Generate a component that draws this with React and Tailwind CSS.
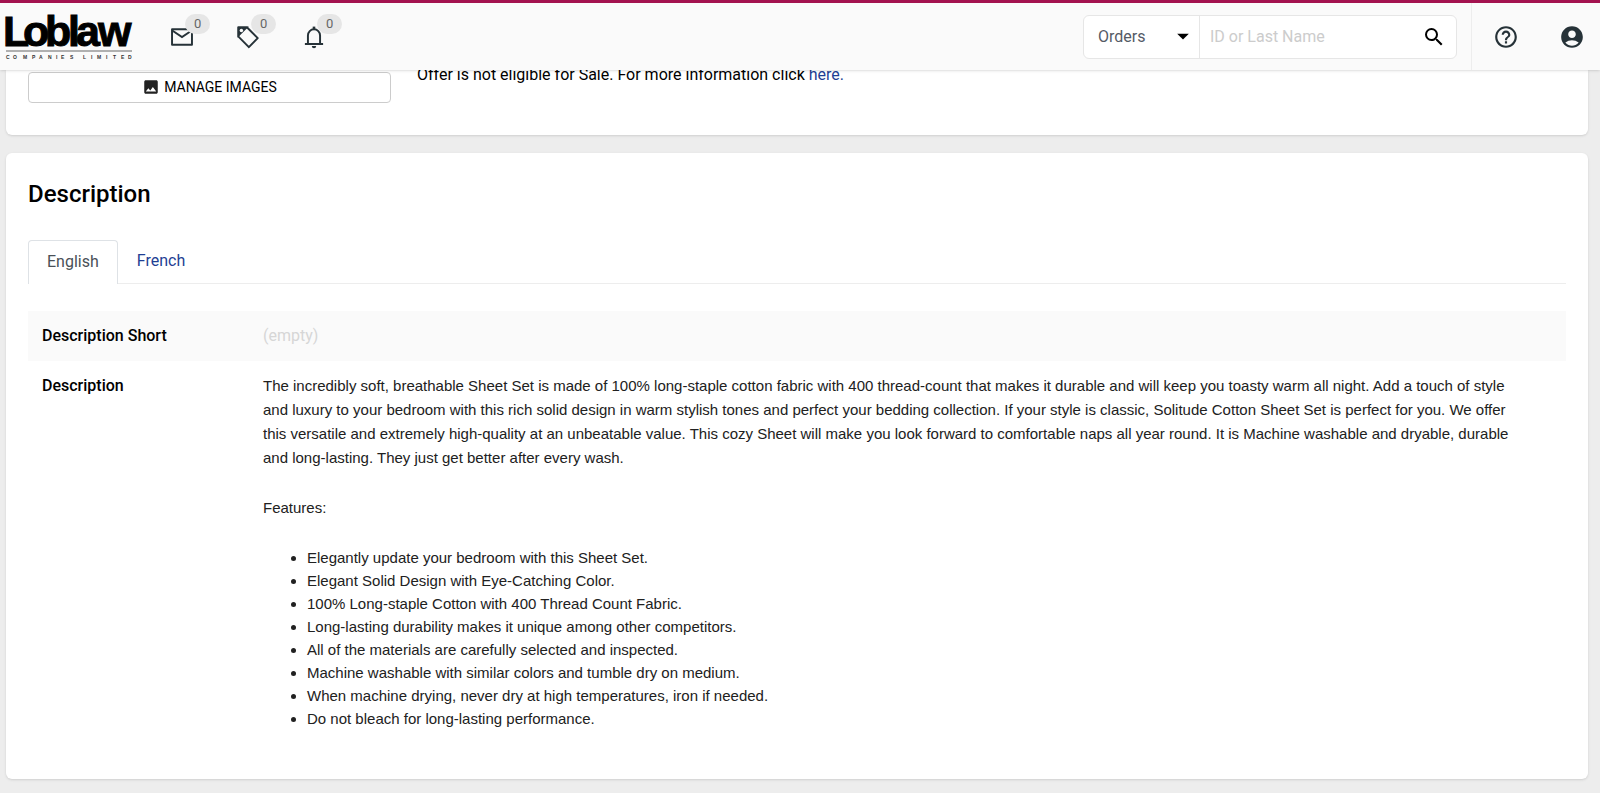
import { useState } from 'react';
import { MdImage, MdSearch, MdHelpOutline, MdAccountCircle, MdArrowDropDown } from 'react-icons/md';

const FEATURES = [
  'Elegantly update your bedroom with this Sheet Set.',
  'Elegant Solid Design with Eye-Catching Color.',
  '100% Long-staple Cotton with 400 Thread Count Fabric.',
  'Long-lasting durability makes it unique among other competitors.',
  'All of the materials are carefully selected and inspected.',
  'Machine washable with similar colors and tumble dry on medium.',
  'When machine drying, never dry at high temperatures, iron if needed.',
  'Do not bleach for long-lasting performance.',
];

function Logo() {
  return (
    <svg width="134" height="60" viewBox="0 0 134 60" role="img" aria-label="Loblaw Companies Limited">
      <text
        x="0 20 42 65 73 95"
        y="39"
        fontSize="43"
        fontWeight="700"
        stroke="#000"
        strokeWidth="1"
        className="font-['Liberation_Sans',sans-serif]"
      >
        Loblaw
      </text>
      <rect x="3" y="43" width="126" height="2" fill="#b0b0b0" />
      <text
        x="3 10 20 29 36 45 53 58 67 73 80 88 94 103 110 118 125"
        y="52"
        fontSize="5"
        fontWeight="700"
        fill="#333"
        className="font-['Liberation_Sans',sans-serif]"
      >
        COMPANIES LIMITED
      </text>
    </svg>
  );
}

function MailIcon() {
  return (
    <svg width="26" height="26" viewBox="0 0 24 24" fill="none" stroke="currentColor" strokeWidth="1.8">
      <path d="M2.8 4.9h18.4v14.2H2.8z" strokeLinejoin="round" />
      <path d="M3 6l9 6 9-6" />
    </svg>
  );
}

function TagIcon() {
  return (
    <svg width="26" height="26" viewBox="0 0 24 24" fill="none" stroke="currentColor" strokeWidth="1.8">
      <path d="M3.2 3.2h8l9.8 9.8-8.2 8.4-9.6-9.8z" strokeLinejoin="round" />
      <path d="M3.2 3.2h7.4l-7.4 7.4z" fill="currentColor" />
      <circle cx="5.9" cy="5.9" r="1.6" fill="#fafafa" stroke="none" />
    </svg>
  );
}

function BellIcon() {
  return (
    <svg width="26" height="26" viewBox="0 0 24 24" fill="none" stroke="currentColor" strokeWidth="1.8">
      <path d="M3.6 18.4h16.8M6.4 18v-7.5a5.6 5.6 0 0 1 11.2 0V18" />
      <path d="M12 4.8V2.4" strokeWidth="2.4" />
      <path d="M10 20.4a2 2 0 0 0 4 0z" fill="currentColor" stroke="none" />
    </svg>
  );
}

function HeaderButton({ label, count, children }) {
  return (
    <button type="button" aria-label={label} className="relative text-[#263238]">
      {children}
      <span className="absolute -top-2.5 left-4 rounded-full bg-[#e6e6e6] px-[9px] text-[13px] leading-5 text-[#666]">
        {count}
      </span>
    </button>
  );
}

function Header() {
  const [query, setQuery] = useState('');

  return (
    <header className="sticky top-0 z-10 flex h-[70px] items-center border-t-[3px] border-[#a3124f] bg-[#fafafa] shadow">
      <a href="#" className="ml-[3px]">
        <Logo />
      </a>
      <nav className="ml-8 flex gap-10">
        <HeaderButton label="Messages" count={0}><MailIcon /></HeaderButton>
        <HeaderButton label="Offers" count={0}><TagIcon /></HeaderButton>
        <HeaderButton label="Notifications" count={0}><BellIcon /></HeaderButton>
      </nav>

      <form
        onSubmit={(e) => e.preventDefault()}
        className="ml-auto flex h-11 w-[374px] rounded-md border border-[#e6e6e6] bg-white"
      >
        <div className="relative flex w-[116px] border-r border-[#e6e6e6]">
          <select aria-label="Search type" className="w-full appearance-none bg-transparent px-3.5 text-[#555b66]">
            <option>Orders</option>
            <option>Offers</option>
          </select>
          <MdArrowDropDown size={28} className="pointer-events-none absolute right-0.5 top-1.5 text-black" />
        </div>
        <input
          type="text"
          aria-label="ID or Last Name"
          placeholder="ID or Last Name"
          value={query}
          onChange={(e) => setQuery(e.target.value)}
          className="min-w-0 flex-1 px-2.5 placeholder:text-[#ccc] focus:outline-none"
        />
        <button type="submit" aria-label="Search" className="px-2.5 text-black">
          <MdSearch size={24} />
        </button>
      </form>

      <div className="ml-3.5 flex items-center gap-10 self-stretch border-l border-[#ededed] pl-[21px] pr-[15px] text-[#263238]">
        <button type="button" aria-label="Help"><MdHelpOutline size={26} /></button>
        <button type="button" aria-label="Account"><MdAccountCircle size={26} /></button>
      </div>
    </header>
  );
}

function Tab({ active, onClick, children }) {
  return (
    <button
      type="button"
      role="tab"
      aria-selected={active}
      onClick={onClick}
      className={
        active
          ? '-mb-px rounded-t border border-b-0 border-[#dee2e6] bg-white px-[18px] pb-2.5 pt-2 leading-6 text-[#495057]'
          : 'border border-b-0 border-transparent px-[18px] pb-2.5 pt-2 leading-6 text-[#1f3f94]'
      }
    >
      {children}
    </button>
  );
}

export default function App() {
  const [tab, setTab] = useState('English');

  return (
    <div className="min-h-screen bg-[#ededed] pb-[15px] font-[Roboto,sans-serif] text-base text-black">
      <Header />
      <main className="mr-3 ml-1.5 flex flex-col gap-[18px]">
        <section className="flex items-start gap-[26px] rounded-b-md bg-white px-[22px] pb-8 pt-0.5 shadow">
          <button
            type="button"
            className="flex h-[31px] w-[363px] items-center justify-center gap-1 rounded border border-[#ccc] pb-0.5 text-sm"
          >
            <MdImage size={18} className="text-[#222]" />
            MANAGE IMAGES
          </button>
          <p className="-mt-[9px] leading-6">
            Offer is not eligible for Sale. For more information click{' '}
            <a href="#" className="text-[#1f3f94]">here.</a>
          </p>
        </section>

        <section className="rounded-md bg-white px-[22px] pb-9 pt-[25px] shadow">
          <h2 className="text-2xl font-medium">Description</h2>

          <div role="tablist" className="mt-[30px] flex border-b border-[#ededed]">
            <Tab active={tab === 'English'} onClick={() => setTab('English')}>English</Tab>
            <Tab active={tab === 'French'} onClick={() => setTab('French')}>French</Tab>
          </div>

          <table className="mt-[27px] w-full">
            <tbody>
              <tr className="bg-[#fafafa] align-top">
                <th scope="row" className="w-[221px] px-3.5 py-[13px] text-left font-medium">Description Short</th>
                <td className="px-3.5 py-[13px] text-[#d6d6d6]">(empty)</td>
              </tr>
              <tr className="align-top">
                <th scope="row" className="px-3.5 py-[13px] text-left font-medium">Description</th>
                <td className="py-[13px] pl-3.5 pr-11 font-['Liberation_Sans',Arial,sans-serif] text-[15px] leading-6 text-[#212121]">
                  <p>
                    The incredibly soft, breathable Sheet Set is made of 100% long-staple cotton fabric with 400
                    thread-count that makes it durable and will keep you toasty warm all night. Add a touch of style
                    and luxury to your bedroom with this rich solid design in warm stylish tones and perfect your
                    bedding collection. If your style is classic, Solitude Cotton Sheet Set is perfect for you. We
                    offer this versatile and extremely high-quality at an unbeatable value. This cozy Sheet will make
                    you look forward to comfortable naps all year round. It is Machine washable and dryable, durable
                    and long-lasting. They just get better after every wash.
                  </p>
                  <p className="mt-[26px]">Features:</p>
                  <ul className="mt-[26px] list-disc pl-11 leading-[23px]">
                    {FEATURES.map((feature) => (
                      <li key={feature}>{feature}</li>
                    ))}
                  </ul>
                </td>
              </tr>
            </tbody>
          </table>
        </section>
      </main>
    </div>
  );
}
